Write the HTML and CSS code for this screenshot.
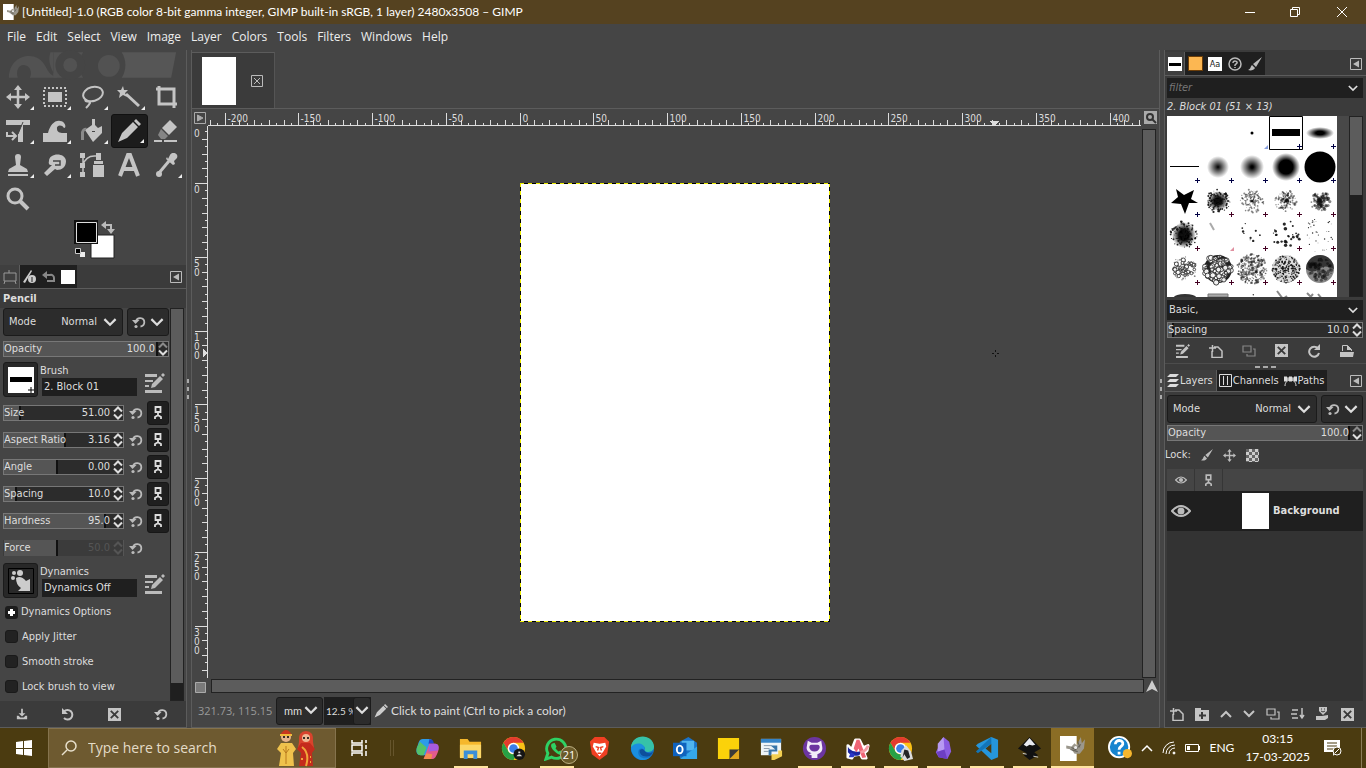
FILE: index.html
```html
<!DOCTYPE html>
<html lang="en">
<head>
    <meta charset="utf-8">
    <title>[Untitled]-1.0 – GIMP</title>
    <link rel="stylesheet" href="styles.css">
</head>
<body>
<!-- shared icons -->
<svg class="sprite" width="0" height="0" aria-hidden="true">
    <symbol id="chevron" viewBox="0 0 12 8"><path d="M1 1l5 5 5-5" fill="none" stroke="currentColor" stroke-width="2"/></symbol>
    <symbol id="chevron-up" viewBox="0 0 12 8"><path d="M1 7l5-5 5 5" fill="none" stroke="currentColor" stroke-width="2"/></symbol>
    <symbol id="arrows" viewBox="0 0 10 14"><path d="M1 5.500l4-4 4 4M1 8.500l4 4 4-4" fill="none" stroke="currentColor" stroke-width="2"/></symbol>
    <symbol id="arrows-down" viewBox="0 0 10 14"><path d="M1 5.500l4-4 4 4" fill="none" stroke="#8a8a8a" stroke-width="2"/><path d="M1 8.500l4 4 4-4" fill="none" stroke="#ddd" stroke-width="2"/></symbol>
    <symbol id="reset" viewBox="0 0 14 14"><path d="M4 6.500A4.200 4.200 0 1 1 8.500 11.500" fill="none" stroke="currentColor" stroke-width="1.800"/><path d="M0 5h7.500L3.500 9z" fill="currentColor"/><circle cx="4" cy="11.500" r="1.600" fill="currentColor"/></symbol>
    <symbol id="undo" viewBox="0 0 14 14"><path d="M3 4.500A4.800 4.800 0 1 1 3 11" fill="none" stroke="currentColor" stroke-width="2"/><path d="M1 1v6h6z" fill="currentColor"/></symbol>
    <symbol id="history" viewBox="0 0 14 14"><path d="M3 5h5a3 3 0 0 1 4 3v3H5" fill="none" stroke="currentColor" stroke-width="2"/><path d="M0 5l5-4v8z" fill="currentColor"/></symbol>
    <symbol id="refresh" viewBox="0 0 14 14"><path d="M11 4.500A5 5 0 1 0 12 9" fill="none" stroke="currentColor" stroke-width="2"/><path d="M13 0v6H7z" fill="currentColor"/></symbol>
    <symbol id="chain" viewBox="0 0 10 14"><path d="M2.500 1h5v5h-5zM5 6v3M2 13v-2l3-2 3 2v2" fill="none" stroke="currentColor" stroke-width="1.800"/></symbol>
    <symbol id="edit" viewBox="0 0 20 20"><path d="M0 1h12v3H0zM0 7h8v2H0zM0 12h4v2H0zM0 17h17v3H0z" fill="currentColor"/><path d="M6 15l1-4 8-8 3 3-8 8zM16 2l2-2 2 2-2 2z" fill="currentColor"/></symbol>
    <symbol id="menu-left" viewBox="0 0 12 12"><path d="M.5.5h11v11H.5z" fill="none" stroke="currentColor"/><path d="M9 2.500v7L3 6z" fill="currentColor"/></symbol>
    <symbol id="close-box" viewBox="0 0 14 14"><path d="M0 0h14v14H0z" fill="currentColor"/><path d="M3 3l8 8M11 3l-8 8" stroke="#3a3a3a" stroke-width="2"/></symbol>
    <symbol id="new" viewBox="0 0 14 14"><path d="M5 3h4l4 4v6.500H3V7M0 4h7M3.500 1v7" fill="none" stroke="currentColor" stroke-width="1.500"/></symbol>
    <symbol id="duplicate" viewBox="0 0 14 14"><path d="M1 2h8v6H1zM11 5h2v7H5v-2" fill="none" stroke="currentColor" stroke-width="1.200"/></symbol>
    <symbol id="save" viewBox="0 0 14 14"><path d="M6 1h2v5h3L7 10 3 6h3zM1 9h2l2 2h4l2-2h2v4H1z" fill="currentColor"/></symbol>
    <symbol id="brush" viewBox="0 0 14 14"><path d="M14 0L8 10 5 7zM4 8l3 3c-1 2-4 3-7 2 3-1 2-3 4-5z" fill="currentColor"/></symbol>
    <symbol id="eye" viewBox="0 0 20 12"><path d="M1 6q9-10 18 0q-9 10-18 0z" fill="none" stroke="currentColor" stroke-width="2"/><circle cx="10" cy="6" r="3.500" fill="currentColor"/></symbol>
    <symbol id="move" viewBox="0 0 24 24"><path d="M12 3v18M3 12h18" stroke="currentColor" stroke-width="2.500"/><path d="M12 0l4 5H8zM12 24l4-5H8zM0 12l5-4v8zM24 12l-5-4v8z" fill="currentColor"/></symbol>
    <symbol id="pencil" viewBox="0 0 24 24"><path d="M1 23l4-9L16 3l5 5L10 19zM17 2l2-2 5 5-2 2z" fill="currentColor"/></symbol>
    <symbol id="chrome" viewBox="0 0 26 26"><circle cx="13" cy="13" r="12" fill="#fbc116"/><path d="M2.600 7A12 12 0 0 1 23.400 7H13a6 6 0 0 0-5.200 9z" fill="#e33b2e"/><path d="M2.600 7A12 12 0 0 0 13 25l5.200-9a6 6 0 0 1-10.400 0z" fill="#27a146"/><circle cx="13" cy="13" r="6" fill="#fff"/><circle cx="13" cy="13" r="4.500" fill="#3b7ee8"/></symbol>
    <symbol id="wilber" viewBox="0 0 24 24"><path d="M0 0h16v24H0z" fill="#fff"/><path d="M6 9l5 1 3-3 2 2 4-8 1 6 3-4-1 9-4 5-5 0-3-4-5-1z" fill="#9b978c"/><path d="M11 11l4 2 5-5M10 13l7 2M17 5l2 6" stroke="#65625a" fill="none"/><circle cx="15" cy="11" r="1.500" fill="#eee"/></symbol>
    <symbol id="chevron-thin" viewBox="0 0 12 8"><path d="M1 7l5-5 5 5" fill="none" stroke="currentColor" stroke-width="1.500"/></symbol>
</svg>

<header class="titlebar">
    <svg class="app-icon" viewBox="0 0 24 24"><use href="#wilber"/></svg>
    <span class="title">[Untitled]-1.0 (RGB color 8-bit gamma integer, GIMP built-in sRGB, 1 layer) 2480x3508 – GIMP</span>
    <button aria-label="Minimize"><svg width="10" height="10"><path d="M0 5.500h10" stroke="#fff"/></svg></button>
    <button aria-label="Restore"><svg width="10" height="10" fill="none" stroke="#fff"><path d="M.5 2.500h7v7h-7zM2.500 2.500v-2h7v7h-2"/></svg></button>
    <button aria-label="Close"><svg width="10" height="10" stroke="#fff"><path d="M0 0l10 10M10 0L0 10"/></svg></button>
</header>

<nav class="menubar">
    <button>File</button><button>Edit</button><button>Select</button><button>View</button><button>Image</button><button>Layer</button><button>Colors</button><button>Tools</button><button>Filters</button><button>Windows</button><button>Help</button>
</nav>

<main class="workspace">
    <aside class="dock left-dock">
        <svg class="banner" viewBox="0 0 188 30" fill="#525252">
            <path d="M9 28C9 8 28 2 38 8s8 14 16 18V2h-3c-3 8 0 18 7 26H30c3-4 1-13-6-13-6 0-8 7-6 13z"/>
            <path d="M54 2h30c-5 9-5 17 0 26H54z"/><circle cx="71" cy="15" r="15" fill="#454545"/><circle cx="71" cy="15" r="7"/>
            <path d="M123 2h55l-5 26h-50c5-8 5-18 0-26z" fill="#565656"/><circle cx="110" cy="16" r="11"/>
        </svg>
        <div class="tools">
            <button class="more" aria-label="Move"><svg viewBox="0 0 24 24"><use href="#move"/></svg></button>
            <button class="more" aria-label="Rectangle select"><svg viewBox="0 0 24 24"><path d="M1 3h22v18H1z" fill="none" stroke="currentColor" stroke-width="2" stroke-dasharray="2 2"/><path d="M5 7h14v10H5z"/></svg></button>
            <button class="more" aria-label="Free select"><svg viewBox="0 0 24 24"><ellipse cx="13" cy="9" rx="10" ry="7" fill="none" stroke="currentColor" stroke-width="2" transform="rotate(-15 13 9)"/><path d="M6 14c-3 4 5 1 4 4-1 2-2 3-4 5" fill="none" stroke="currentColor" stroke-width="2"/></svg></button>
            <button class="more" aria-label="Fuzzy select"><svg viewBox="0 0 24 24"><path d="M6 1l1 4 4 0-3 3 2 4-4-2-4 3 1-5-3-3 4 0z"/><path d="M9 9l13 12" stroke="currentColor" stroke-width="3"/></svg></button>
            <button aria-label="Crop"><svg viewBox="0 0 24 24"><path d="M2 4h18v19M5 1v18h18" fill="none" stroke="currentColor" stroke-width="3"/></svg></button>
            <button class="more" aria-label="Unified transform"><svg viewBox="0 0 24 24"><path d="M0 1h24v5h-7v17h-5V15l4-9H0z"/><path d="M17 3l-5 12" stroke="#454545"/><path d="M1 13v4h9m-4-4l4 4-4 4" fill="none" stroke="currentColor" stroke-width="2"/></svg></button>
            <button class="more" aria-label="Warp"><svg viewBox="0 0 24 24"><path d="M0 23v-9h5C7 6 12 1 17 2c5 0 7 7 4 7-2-4-8-3-7 1 0 3 3 4 6 4h4v9z"/></svg></button>
            <button class="more" aria-label="Bucket fill"><svg viewBox="0 0 24 24"><path d="M5 11l7-5v7h3V6l3 3 4-2v7L13 23z"/><path d="M12 0h3v12h-3z"/><path d="M1 21V13q2-5 6-4l-3 4v8z" fill="#8a8a8a"/></svg></button>
            <button class="more active" aria-label="Pencil"><svg viewBox="0 0 24 24"><use href="#pencil"/></svg></button>
            <button aria-label="Eraser"><svg viewBox="0 0 24 24"><path d="M16 1l7 7-8 8-7-7z"/><path d="M7 10l7 7-3 3H7l-3-4z" fill="#858585"/><path d="M0 21h8v2H0zM10 21h13v2H10z"/></svg></button>
            <button class="more" aria-label="Clone"><svg viewBox="0 0 24 24"><path d="M9 4a3 3 0 0 1 6 0l-1 8 7 4 1 3H2l1-3 7-4zM2 21h20v2H2z"/></svg></button>
            <button class="more" aria-label="Smudge"><svg viewBox="0 0 24 24"><path d="M6 8c0-8 16-9 17 0 0 6-4 9-9 9l-2-1-8 7-3-3 8-8c-2 0-4 0-3-4z"/><path d="M10 8h7v4h-5" fill="none" stroke="#454545" stroke-width="1.500"/></svg></button>
            <button aria-label="Paths"><svg viewBox="0 0 24 24"><path d="M3 2v20M3 12Q6 2 16 3" fill="none" stroke="currentColor" stroke-width="1.500"/><path d="M0 0h5v5H0zM0 10h5v5H0zM0 19h5v5H0zM16 0h5v7h-5zM14 8h9v3h-9zM13 12h11v12H13z"/></svg></button>
            <button aria-label="Text"><svg viewBox="0 0 24 24"><path d="M3 23L11 2h2l8 21M6 16h12" fill="none" stroke="currentColor" stroke-width="4"/></svg></button>
            <button class="more" aria-label="Color picker"><svg viewBox="0 0 24 24"><path d="M14 6l2-4c2-4 9-2 7 3l-3 3 1 3-2 1-7-6 1-2z"/><path d="M15 8L5 20" stroke="currentColor" stroke-width="3"/><circle cx="5" cy="21" r="3"/></svg></button>
            <button aria-label="Zoom"><svg viewBox="0 0 24 24"><circle cx="9" cy="9" r="7" fill="none" stroke="currentColor" stroke-width="3"/><path d="M14 14l8 8" stroke="currentColor" stroke-width="4"/></svg></button>
        </div>
        <div class="colors">
            <svg width="42" height="40" viewBox="0 0 42 40">
                <path d="M17 15h23v23H17z" fill="#fff" stroke="#222"/><path d="M1 1h22v22H1z" stroke="#111" stroke-width="2"/><path d="M2.500 2.500h20v20h-20z" stroke="#ddd"/>
                <path d="M30 5h7v6" fill="none" stroke="#bbb" stroke-width="2"/><path d="M27 5l5-4v8zM33 9h8l-4 5z" fill="#bbb"/>
                <path d="M6 32h5v5H6z" fill="#eee"/><path d="M1.500 28.500h5v5h-5z" stroke="#ccc"/>
            </svg>
        </div>
        <div class="dock-tabs">
            <button class="tab active" aria-label="Tool options"><svg width="16" height="16" fill="none" stroke="#999"><path d="M2 4h12v8H2zM7 1v3M3 12l-1 3m11-3l1 3"/></svg></button>
            <button class="tab" aria-label="Device status"><svg width="16" height="16"><path d="M1 13L9 1l1 1-7 12z" fill="#ccc"/><circle cx="10" cy="10" r="4" fill="#ccc"/><path d="M10 8v5" stroke="#222"/></svg></button>
            <button class="tab" aria-label="Undo history"><svg width="14" height="14" class="dim"><use href="#history"/></svg></button>
            <button class="tab" aria-label="Images"><i class="white-box"></i></button>
            <button class="dock-menu" aria-label="Configure this tab"><svg width="12" height="12"><use href="#menu-left"/></svg></button>
        </div>
        <section class="options">
            <h2>Pencil</h2>
            <div class="options-body">
                <div class="fields">
                    <div class="mode-row">
                        <div class="combo"><label for="mode">Mode</label><select id="mode"><option>Normal</option></select><svg width="14" height="9"><use href="#chevron"/></svg></div>
                        <button class="combo reset-combo" aria-label="Switch mode group"><svg width="14" height="14"><use href="#reset"/></svg><svg width="14" height="9"><use href="#chevron"/></svg></button>
                    </div>
                    <div class="spin full" style="--fill: 94%"><label for="opacity">Opacity</label><input id="opacity" value="100.0"><svg width="10" height="14"><use href="#arrows-down"/></svg></div>
                    <div class="preset">
                        <button class="preview" aria-label="Brush preview"><svg width="26" height="26"><path d="M0 0h26v26H0z" fill="#fff"/><path d="M2 10h22v5H2z"/><path d="M20 23h6M23 20v6" stroke="#000"/></svg></button>
                        <div><label for="brush-name">Brush</label><input id="brush-name" value="2. Block 01"></div>
                        <button class="icon" aria-label="Edit brush"><svg width="20" height="20"><use href="#edit"/></svg></button>
                    </div>
                    <div class="row"><div class="spin" style="--fill: 14%"><label for="size">Size</label><input id="size" value="51.00"><svg width="10" height="14"><use href="#arrows"/></svg></div><button class="icon" aria-label="Reset size"><svg width="14" height="14"><use href="#reset"/></svg></button><button class="link" aria-label="Link size"><svg width="10" height="14"><use href="#chain"/></svg></button></div>
                    <div class="row"><div class="spin" style="--fill: 52%"><label for="ratio">Aspect Ratio</label><input id="ratio" value="3.16"><svg width="10" height="14"><use href="#arrows"/></svg></div><button class="icon" aria-label="Reset aspect ratio"><svg width="14" height="14"><use href="#reset"/></svg></button><button class="link" aria-label="Link aspect ratio"><svg width="10" height="14"><use href="#chain"/></svg></button></div>
                    <div class="row"><div class="spin" style="--fill: 45%"><label for="angle">Angle</label><input id="angle" value="0.00"><svg width="10" height="14"><use href="#arrows"/></svg></div><button class="icon" aria-label="Reset angle"><svg width="14" height="14"><use href="#reset"/></svg></button><button class="link" aria-label="Link angle"><svg width="10" height="14"><use href="#chain"/></svg></button></div>
                    <div class="row"><div class="spin" style="--fill: 11%"><label for="spacing">Spacing</label><input id="spacing" value="10.0"><svg width="10" height="14"><use href="#arrows"/></svg></div><button class="icon" aria-label="Reset spacing"><svg width="14" height="14"><use href="#reset"/></svg></button><button class="link" aria-label="Link spacing"><svg width="10" height="14"><use href="#chain"/></svg></button></div>
                    <div class="row"><div class="spin" style="--fill: 86%"><label for="hardness">Hardness</label><input id="hardness" value="95.0"><svg width="10" height="14"><use href="#arrows"/></svg></div><button class="icon" aria-label="Reset hardness"><svg width="14" height="14"><use href="#reset"/></svg></button><button class="link" aria-label="Link hardness"><svg width="10" height="14"><use href="#chain"/></svg></button></div>
                    <div class="row"><div class="spin disabled" style="--fill: 45%"><label for="force">Force</label><input id="force" value="50.0" disabled><svg width="10" height="14"><use href="#arrows"/></svg></div><button class="icon" aria-label="Reset force"><svg width="14" height="14"><use href="#reset"/></svg></button></div>
                    <div class="preset">
                        <button class="preview" aria-label="Dynamics preview"><svg width="26" height="26" fill="#ccc"><path d="M.5.5h25v25H.5z" fill="none" stroke="#000"/><circle cx="5" cy="10" r="2"/><circle cx="6" cy="5" r="2"/><circle cx="12" cy="5" r="3"/><path d="M8 10q5-3 10 3l4-2v12H10l3-3q-5-3-5-10z"/></svg></button>
                        <div><label for="dynamics">Dynamics</label><input id="dynamics" value="Dynamics Off"></div>
                        <button class="icon" aria-label="Edit dynamics"><svg width="20" height="20"><use href="#edit"/></svg></button>
                    </div>
                    <button class="expander"><i></i>Dynamics Options</button>
                    <label class="check"><input type="checkbox">Apply Jitter</label>
                    <label class="check"><input type="checkbox">Smooth stroke</label>
                    <label class="check"><input type="checkbox">Lock brush to view</label>
                </div>
                <div class="scroll"><i></i></div>
            </div>
        </section>
        <footer class="dock-buttons">
            <button aria-label="Save preset"><svg width="12" height="14"><use href="#save"/></svg></button>
            <button aria-label="Restore preset"><svg width="14" height="14"><use href="#undo"/></svg></button>
            <button aria-label="Delete preset"><svg width="13" height="13"><use href="#close-box"/></svg></button>
            <button aria-label="Reset"><svg width="14" height="14"><use href="#reset"/></svg></button>
        </footer>
    </aside>
    <div class="splitter"><i></i><i></i><i></i></div>

    <section class="image-window">
        <div class="image-tabs">
            <div class="image-tab"><i class="thumb"></i><button aria-label="Close image"><svg width="12" height="12" fill="none" stroke="#bbb"><path d="M.5.5h11v11H.5zM3 3l6 6M9 3L3 9"/></svg></button></div>
        </div>
        <div class="view">
            <button class="corner" aria-label="Image menu"><svg width="12" height="12" fill="none" stroke="#aaa"><path d="M.5.5h11v11H.5z"/><path d="M3.500 3v6L9 6z" fill="#aaa"/></svg></button>
            <svg class="ruler ruler-h" id="rulerH"></svg>
            <button class="corner" aria-label="Zoom with window"><svg width="13" height="13" fill="none"><path d="M0 0h13v13H0z" fill="#aaa"/><circle cx="6" cy="6" r="3" stroke="#333" stroke-width="2"/><path d="M8 8l4 4" stroke="#333" stroke-width="2"/></svg></button>
            <svg class="ruler ruler-v" id="rulerV"></svg>
            <div class="canvas" id="canvas">
                <div class="page"></div>
                <svg class="pointer" width="7" height="7" stroke="#111" fill="none"><path d="M0 3.500h2M5 3.500h2M3.500 0v2M3.500 5v2"/></svg>
            </div>
            <div class="scroll"><i></i></div>
            <button class="corner" aria-label="Quick mask"><svg width="11" height="11"><path d="M.5.5h10v10H.5z" fill="#7a7a7a" stroke="#aaa"/></svg></button>
            <div class="scroll scroll-h"><i></i></div>
            <button class="corner nav" aria-label="Navigate"><svg width="12" height="12"><path d="M6 0l6 12-6-3-6 3z" fill="#ccc"/></svg></button>
        </div>
        <div class="statusbar">
            <span class="coords">321.73, 115.15</span>
            <div class="combo unit"><select aria-label="Unit"><option>mm</option></select><svg width="14" height="9"><use href="#chevron"/></svg></div>
            <div class="zoom"><input aria-label="Zoom" value="12.5 %"><button aria-label="Zoom levels"><svg width="14" height="9"><use href="#chevron"/></svg></button></div>
            <svg class="status-icon" width="14" height="14"><use href="#pencil"/></svg>
            <span>Click to paint (Ctrl to pick a color)</span>
        </div>
    </section>
    <div class="splitter"><i></i><i></i><i></i></div>

    <aside class="dock right-dock">
        <div class="dock-tabs">
            <button class="tab active" aria-label="Brushes"><svg width="14" height="14"><path d="M0 0h14v14H0z" fill="#fff"/><path d="M1 6h12v3H1z"/></svg></button>
            <button class="tab" aria-label="Patterns"><i class="pattern"></i></button>
            <button class="tab" aria-label="Fonts"><span class="font-icon">Aa</span></button>
            <button class="tab" aria-label="Document history"><svg width="14" height="14" fill="none" stroke="#bbb" stroke-width="1.500"><circle cx="7" cy="7" r="6"/><path d="M5 6c0-3 5-2 4 0L7 8v1M7 10v1"/></svg></button>
            <button class="tab" aria-label="Paint tools"><svg width="14" height="14" class="light"><use href="#brush"/></svg></button>
            <button class="dock-menu" aria-label="Configure this tab"><svg width="12" height="12"><use href="#menu-left"/></svg></button>
        </div>
        <section class="brushes">
            <div class="entry"><input class="filter" aria-label="Filter" placeholder="filter"><svg width="10" height="7"><use href="#chevron"/></svg></div>
            <p class="brush-title">2. Block 01 (51 × 13)</p>
            <div class="brush-list">
                <div class="brush-grid" id="brushGrid"></div>
                <div class="scroll"><i></i></div>
            </div>
            <div class="entry"><input aria-label="Tags" value="Basic,"><svg width="10" height="7"><use href="#chevron"/></svg></div>
            <div class="spin full" style="--fill: 3%"><label for="bspacing">Spacing</label><input id="bspacing" value="10.0"><svg width="10" height="14"><use href="#arrows"/></svg></div>
            <div class="dock-buttons">
                <button aria-label="Edit this brush"><svg width="14" height="14"><use href="#edit"/></svg></button>
                <button aria-label="New brush"><svg width="14" height="14"><use href="#new"/></svg></button>
                <button aria-label="Duplicate brush" class="dim"><svg width="14" height="14"><use href="#duplicate"/></svg></button>
                <button aria-label="Delete brush"><svg width="13" height="13"><use href="#close-box"/></svg></button>
                <button aria-label="Refresh brushes"><svg width="14" height="14"><use href="#refresh"/></svg></button>
                <button aria-label="Open brush as image"><svg width="14" height="14"><path d="M2.500 7V1.500h5l4 4V7" fill="none" stroke="currentColor"/><path d="M7 1l5 5H7zM0 8h14l-1 5H0z" fill="currentColor"/></svg></button>
            </div>
        </section>
        <div class="grip"><i></i><i></i><i></i></div>
        <div class="dock-tabs labelled">
            <button class="tab active"><svg width="12" height="14" fill="currentColor"><path d="M3 0h9l-3 3H0zM3 5h9l-3 3H0zM3 10h9l-3 3H0z"/></svg>Layers</button>
            <button class="tab"><svg width="13" height="13" fill="none" stroke="currentColor"><path d="M.5.5h12v12H.5zM4.500 2v9M8.500 2v9"/></svg>Channels</button>
            <button class="tab"><svg width="13" height="12" fill="none" stroke="currentColor"><path d="M0 4h13M1 11c0-8 11-8 11 0"/><path d="M0 2h3v4H0zM10 2h3v4h-3zM5 2h3v4H5z" fill="currentColor"/></svg>Paths</button>
            <button class="dock-menu" aria-label="Configure this tab"><svg width="12" height="12"><use href="#menu-left"/></svg></button>
        </div>
        <section class="layers">
            <div class="mode-row">
                <div class="combo"><label for="lmode">Mode</label><select id="lmode"><option>Normal</option></select><svg width="14" height="9"><use href="#chevron"/></svg></div>
                <button class="combo reset-combo" aria-label="Switch mode group"><svg width="14" height="14"><use href="#reset"/></svg><svg width="14" height="9"><use href="#chevron"/></svg></button>
            </div>
            <div class="spin full" style="--fill: 94%"><label for="lopacity">Opacity</label><input id="lopacity" value="100.0"><svg width="10" height="14"><use href="#arrows-down"/></svg></div>
            <div class="lock">Lock:
                <button aria-label="Lock pixels"><svg width="12" height="12"><use href="#brush"/></svg></button>
                <button aria-label="Lock position"><svg width="13" height="13"><use href="#move"/></svg></button>
                <button aria-label="Lock alpha"><i class="checker"></i></button>
            </div>
            <div class="layer-list">
                <div class="layer-head"><span><svg width="12" height="8"><use href="#eye"/></svg></span><span><svg width="9" height="13"><use href="#chain"/></svg></span></div>
                <div class="layer"><svg width="20" height="12"><use href="#eye"/></svg><i></i><b>Background</b></div>
            </div>
        </section>
        <footer class="dock-buttons">
            <button aria-label="New layer"><svg width="14" height="14"><use href="#new"/></svg></button>
            <button aria-label="New group"><svg width="14" height="14"><path d="M0 1h6v2h8v11H0z" fill="currentColor"/><path d="M7 5v7M4 8.500h7" stroke="#3a3a3a" stroke-width="2"/></svg></button>
            <button aria-label="Raise layer"><svg width="12" height="8"><use href="#chevron-up"/></svg></button>
            <button aria-label="Lower layer"><svg width="12" height="8"><use href="#chevron"/></svg></button>
            <button aria-label="Duplicate layer"><svg width="14" height="14"><use href="#duplicate"/></svg></button>
            <button aria-label="Merge layer"><svg width="14" height="12" fill="none" stroke="currentColor" stroke-width="1.500"><path d="M1 2h6M0 6h6M1 10h6M11 0v10M9 7l2 3 2-3"/></svg></button>
            <button aria-label="Add mask"><svg width="14" height="14" fill="currentColor"><path d="M3 0h8v4L7 8 3 4zM0 9h6l6-1v3l-3 2H0z"/><path d="M5 2h1M8 2h1M5 4q2 2 4 0" fill="none" stroke="#3a3a3a"/></svg></button>
            <button aria-label="Delete layer"><svg width="13" height="13"><use href="#close-box"/></svg></button>
        </footer>
    </aside>
</main>

<footer class="taskbar">
    <button class="start" aria-label="Start"><svg width="16" height="16" fill="#fff"><path d="M0 2l7-1v7H0zM8 1l8-1v8H8zM0 9h7v6l-7-1zM8 9h8v7l-8-1z"/></svg></button>
    <div class="search">
        <svg width="16" height="16" fill="none" stroke="#e8e0cc" stroke-width="1.500"><circle cx="10" cy="6" r="5"/><path d="M6 10l-5 5"/></svg>
        <input aria-label="Search" placeholder="Type here to search">
        <svg width="42" height="38" viewBox="0 0 42 38">
            <path d="M6 14h11l4 6-3 4 1 13H4l2-13-4-4z" fill="#efc24c"/><circle cx="11" cy="8" r="5" fill="#e7b38a"/><path d="M5 6q6-10 12 0z" fill="#c8371e"/><path d="M5 6h12" stroke="#f2b93a" stroke-width="2"/><path d="M11 17v18M8 20l3 4 3-4" stroke="#b97a1d" fill="none"/><circle cx="9" cy="8" r="1"/><circle cx="13" cy="8" r="1"/>
            <path d="M24 13q-1-11 7-11t7 11l1 6H23z" fill="#d8432c"/><path d="M26 14h9l5 6-3 4 1 13H24l2-13-4-4z" fill="#c42b1c"/><circle cx="31" cy="9" r="4" fill="#efb993"/><circle cx="29" cy="9" r="1"/><circle cx="33" cy="9" r="1"/><path d="M27 18q8 6 4 19M26 30h2M35 28h1M35 33h1" fill="none" stroke="#f0a63a" stroke-width="2"/>
        </svg>
    </div>
    <div class="apps">
        <button aria-label="Task view"><svg width="18" height="16" fill="none" stroke="#fff" stroke-width="1.500"><path d="M1 0v3h10V0M1 16v-3h10v3M1 5h10v6H1zM15 0v3M15 5v4M15 11v5"/></svg></button>
        <span class="divider"></span>
        <button aria-label="Copilot"><svg viewBox="0 0 26 26"><path d="M8 3h9l-5 17H6c-5 0-5-5-4-8 2-5 2-9 6-9z" fill="#2d9be8"/><path d="M2 12l3-6 7 6-3 8H6c-4 0-5-4-4-8z" fill="#54c26a"/><path d="M15 3c4 0 4 3 5 5h-6z" fill="#2345c6"/><path d="M15 8h6c4 0 4 5 3 8-2 5-3 8-7 8H9z" fill="#e25a8e"/><path d="M15 8h6c4 0 4 4 3 7l-10 1z" fill="#a85be0"/><path d="M9 24l3-6 6 1-1 5z" fill="#f38b52"/></svg></button>
        <button class="open" aria-label="File Explorer"><svg viewBox="0 0 26 26"><path d="M2 3h8l2 3h12v16H2z" fill="#f5b72c"/><path d="M2 9h22v14H2z" fill="#fbd768"/><path d="M6 24v-9h14v9h-4v-5h-6v5z" fill="#3b8fd8"/></svg></button>
        <button aria-label="Chrome"><svg viewBox="0 0 26 26"><use href="#chrome"/><circle cx="19" cy="19" r="6" fill="#151515"/><path d="M16 21q3-4 6 0zM18 16h2v2h-2z" fill="#ddd"/></svg></button>
        <button class="open" aria-label="WhatsApp"><svg viewBox="0 0 26 26"><path d="M2 24l2-6a10 10 0 1 1 4 4z" fill="none" stroke="#2ed164" stroke-width="3"/><path d="M8 8l3-1 2 4-1 2 3 3 2-1 3 2c-1 4-5 3-8 0S6 11 8 8z" fill="#2ed164"/></svg><em class="count">21</em></button>
        <button aria-label="Brave"><svg viewBox="0 0 26 26"><path d="M8 1h10l5 5-2 13-8 6-8-6L3 6z" fill="#f13f22"/><path d="M7 7l6 1 6-1 1 4-3 5-4 5-4-5-3-5z" fill="#fff"/><path d="M9 11l3 1-1 3M17 11l-3 1 1 3M11 18h4" fill="none" stroke="#f13f22" stroke-width="1.500"/></svg></button>
        <button aria-label="Edge"><svg viewBox="0 0 26 26"><circle cx="13" cy="13" r="12" fill="#1574c8"/><path d="M1 12C2-3 24-3 25 11c0 6-7 7-10 4 3-6-8-9-14-3z" fill="#36c2a8"/><path d="M1 12c4-7 16-5 14 3-4-5-9 1-5 6 3 3 8 3 12 0-9 9-21 1-21-9z" fill="#1b8fdf"/><path d="M10 15c2-2 4-1 5 0 2 3 6 4 9 1-1 3-3 5-5 5-6 1-9-2-9-6z" fill="#0d4f9c"/></svg></button>
        <button aria-label="Outlook"><svg viewBox="0 0 26 26"><path d="M7 6l9-5 9 6v16H7z" fill="#1a73c8"/><path d="M9 5h13v10H9z" fill="#50b4ee"/><path d="M7 24l18-13v13z" fill="#35a7ea"/><path d="M0 7h14v14H0z" fill="#0f62bd"/><ellipse cx="7" cy="14" rx="3" ry="4" fill="none" stroke="#fff" stroke-width="2"/></svg></button>
        <button aria-label="Sticky Notes"><svg viewBox="0 0 26 26"><path d="M2 2h22v12L14 24H2z" fill="#fbd20a"/><path d="M14 14h10v10H14z" fill="#3b3a38"/><path d="M14 24l10-10v10z" fill="#e2a81d"/></svg></button>
        <button aria-label="Python editor"><svg viewBox="0 0 26 26"><path d="M2 3h21v17H2z" fill="#eef4f8"/><path d="M2 3h21v4H2z" fill="#3584c8"/><path d="M5 10h8M5 13h6M5 16h5" stroke="#89a"/><path d="M12 10h7v6h-6v4h-3v-6h7" fill="#3674a8"/><path d="M24 15v6l-8 4h-3v-6h7v-4z" fill="#f2cf51"/></svg></button>
        <button class="open" aria-label="GitHub"><svg viewBox="0 0 26 26"><circle cx="13" cy="13" r="12" fill="#6c35a0"/><path d="M6 5l4 2h6l4-2 1 6c1 5-2 7-5 8v4h-6v-3l-3-1 3-1c-3-1-6-3-5-7z" fill="#f2ecf8"/><path d="M10 9h6c4 0 3 7-3 7s-7-7-3-7z" fill="#6c35a0"/></svg></button>
        <button class="open" aria-label="Arc"><svg viewBox="0 0 26 26"><path d="M3 10l4 4 4-10h4l4 8 5-2-1 5-3 3 2 5-4 0-2-4-7 1-2 3-4-1z" fill="#fff" stroke="#fff" stroke-width="3" stroke-linejoin="round"/><path d="M3 11c2 5 10 7 14 4l-2 5c-5 1-9 1-12-3z" fill="#1c27a0"/><path d="M9 13L12 4h3l7 18-4 1-4-10-2 4z" fill="#ee6475"/><path d="M4 22l2-5 4 2-1 3z" fill="#2a38c8"/><path d="M16 17q6-1 8-7" stroke="#f49aa2" stroke-width="3" fill="none"/></svg></button>
        <button class="open" aria-label="Chrome profile"><svg viewBox="0 0 26 26"><use href="#chrome"/><path d="M14 15l5-5 5 6 2 8-9 2-4-5z" fill="#ddd"/><path d="M17 14l4 1 2 7-3 2-3-5-2 4z" fill="#252525"/></svg></button>
        <button class="open" aria-label="Obsidian"><svg viewBox="0 0 26 26"><path d="M13 1l6 5 2 10-4 8-9-2-3-5 2-4z" fill="#8a5be0"/><path d="M13 1l1 13-7 2 0-8z" fill="#b79af2"/><path d="M6 17l8-3 3 10-9-2z" fill="#6d3fc4"/></svg></button>
        <button class="open" aria-label="VS Code"><svg viewBox="0 0 26 26"><path d="M18 1l7 3v18l-7 3L2 10l2-2z" fill="#2596dc"/><path d="M18 8v10l-6-5z" fill="#4b3b10"/><path d="M2 16l16-15v7L4 18z" fill="#1275b8"/></svg></button>
        <button class="open" aria-label="Inkscape"><svg viewBox="0 0 26 26"><path d="M13 1l12 12-7 4 4 3-9 5-6-5 3-2-9-5z" fill="#111"/><path d="M13 2l6 7-3 1-3-1-3 2-3-2z" fill="#e8eaf0"/><path d="M6 18l4 1M17 21l5 1" stroke="#ccc"/></svg></button>
        <button class="open current" aria-label="GIMP"><svg viewBox="0 0 24 24"><use href="#wilber"/></svg></button>
    </div>
    <div class="tray">
        <svg class="help" viewBox="0 0 26 26"><circle cx="12" cy="12" r="11" fill="#1684cf" stroke="#fff" stroke-width="2"/><path d="M8 9c0-6 9-5 8 0-1 3-4 2-4 6M12 17v3" fill="none" stroke="#fff" stroke-width="3"/><circle cx="21" cy="19" r="5" fill="#f5b62d"/></svg>
        <svg width="12" height="8"><use href="#chevron-thin"/></svg>
        <svg width="14" height="14" fill="none" stroke="#fff"><path d="M1 12A11 11 0 0 1 12 1M4 13a9 9 0 0 1 9-9M7 13a6 6 0 0 1 6-6"/><circle cx="12" cy="12" r="1" fill="#fff"/></svg>
        <svg width="16" height="10" fill="none" stroke="#fff"><path d="M.5 1.500h13v7H.5zM14.500 3v4"/><path d="M2 3h3v4H2z" fill="#fff" stroke="none"/></svg>
        <span>ENG</span>
        <time>03:15<br>17-03-2025</time>
        <svg width="18" height="17"><path d="M0 0h16v12h-4l-3 4v-4H0z" fill="#fff"/><path d="M3 3h10M3 6h10M3 9h7" stroke="#4b3b10"/><circle cx="13" cy="11" r="4" fill="#4b3b10" stroke="#fff"/><path d="M11 13l4-4" stroke="#fff"/></svg>
    </div>
</footer>
<script src="script.js"></script>
</body>
</html>
```
FILE: styles.css
```css
* {
    box-sizing: border-box;
}
body {
    margin: 0;
    height: 100vh;
    display: flex;
    flex-direction: column;
    overflow: hidden;
    background: #454545;
    color: #ddd;
    font: 11px/14px "DejaVu Sans Condensed", "Noto Sans", sans-serif;
}
button,
input,
select {
    font: inherit;
    color: inherit;
    background: none;
    border: 0;
    padding: 0;
    margin: 0;
    min-width: 0;
}
button {
    display: flex;
    align-items: center;
    justify-content: center;
}
input {
    outline: 0;
}
svg {
    display: block;
    flex: none;
}
i {
    display: block;
}
.sprite {
    position: absolute;
}

/* window frame */
.titlebar {
    height: 24px;
    display: flex;
    align-items: center;
    background: #554220;
    color: #fff;
    font: 12px/16px Lato, "Open Sans", sans-serif;
}
.app-icon {
    width: 18px;
    height: 16px;
    margin: 0 2px;
}
.title {
    flex: 1;
    white-space: nowrap;
}
.titlebar button {
    width: 45px;
    height: 20px;
}
.titlebar button:last-child {
    width: 49px;
}
.menubar {
    height: 26px;
    display: flex;
    padding-left: 2px;
    color: #eee;
    font: 12px/16px "Open Sans", sans-serif;
}
.menubar button {
    padding: 0 5px;
}
.workspace {
    flex: 1;
    min-height: 0;
    display: flex;
}

/* docks */
.dock {
    flex: none;
    display: flex;
    flex-direction: column;
}
.left-dock {
    width: 187px;
    border-right: 1px solid #5c5c5c;
}
.right-dock {
    width: 202px;
    padding-top: 2px;
    background: #3b3b3b;
    border-left: 1px solid #5c5c5c;
}
.banner {
    width: 100%;
    height: 30px;
}
.tools {
    display: grid;
    grid-template-columns: repeat(5, 37px);
    grid-auto-rows: 34px;
}
.tools button {
    color: #c4c4c4;
    fill: currentColor;
    border-radius: 3px;
    padding-right: 2px;
}
.tools svg {
    width: 24px;
    height: 24px;
}
.tools .active {
    background: #1c1c1c;
    border: 1px solid #111;
}
.more {
    position: relative;
}
.more::after {
    content: "";
    position: absolute;
    right: 3px;
    bottom: 4px;
    border-left: 4px solid transparent;
    border-bottom: 4px solid #eee;
}
.colors {
    height: 49px;
    padding: 4px 0 0 74px;
}
.dock-tabs {
    height: 24px;
    flex: none;
    display: flex;
    align-items: stretch;
    background: #3b3b3b;
    border-bottom: 1px solid #5c5c5c;
}
.tab {
    width: 20px;
    background: #1f1f1f;
}
.left-dock .tab {
    width: 19px;
}
.left-dock .tab.active,
.right-dock .tab.active {
    width: 20px;
}
.tab.active {
    background: #3f3f3f;
    border-right: 1px solid #5c5c5c;
}
.dock-menu {
    margin: 0 4px 0 auto;
    color: #bbb;
}
.white-box {
    width: 14px;
    height: 14px;
    background: #fff;
}
.dim {
    color: #888;
}
.light {
    color: #bbb;
}
.pattern {
    width: 13px;
    height: 13px;
    background: #fcb752;
    outline: 1px solid #6b3d08;
}
.font-icon {
    width: 14px;
    background: #fff;
    color: #222;
    font-size: 9px;
    line-height: 14px;
}
.labelled .tab,
.labelled .tab.active {
    width: auto;
    gap: 1px;
    padding: 0 3px 0 2px;
}

/* tool options */
.options {
    flex: 1;
    min-height: 0;
    padding: 3px 2px 0 3px;
    background: linear-gradient(#3b3b3b 19px, #454545 19px);
}
h2 {
    margin: 0 0 2px;
    font-size: 11px;
    line-height: 14px;
}
.options-body {
    display: flex;
    justify-content: space-between;
    height: calc(100% - 16px);
}
.fields {
    width: 166px;
}
.mode-row {
    display: flex;
    gap: 4px;
    height: 28px;
}
.combo {
    flex: 1;
    position: relative;
    display: flex;
    align-items: center;
    gap: 4px;
    padding: 0 5px;
    background: #2c2c2c;
    border: 1px solid #1b1b1b;
    border-radius: 3px;
}
.combo select {
    appearance: none;
    flex: 1;
    text-align: right;
    text-align-last: right;
    padding-right: 2px;
}
.reset-combo {
    flex: 0 0 42px;
    padding: 0;
}
.reset-combo svg:first-child {
    color: #bbb;
}
.spin {
    width: 121px;
    height: 16px;
    display: flex;
    align-items: center;
    justify-content: space-between;
    border: 1px solid #777;
    background: linear-gradient(90deg, #555 calc(var(--fill) - 2px), #111 calc(var(--fill) - 2px) var(--fill), #2c2c2c var(--fill));
}
.spin input {
    flex: 1;
    width: 20px;
    text-align: right;
    margin-right: 3px;
}
.spin.full {
    width: 100%;
}
.spin.disabled {
    border-color: transparent;
    background: linear-gradient(90deg, #555 calc(var(--fill) - 2px), #111 calc(var(--fill) - 2px) var(--fill), #3b3b3b var(--fill));
}
.disabled input,
.disabled svg {
    color: #555;
}
.fields > .spin {
    margin: 5px 0;
}
.preset {
    display: flex;
    align-items: center;
    gap: 2px;
    height: 35px;
}
.preset > div {
    width: 97px;
}
.preset label {
    display: block;
}
.preset input {
    width: 95px;
    height: 18px;
    margin-left: 2px;
    padding-left: 2px;
    background: #1f1f1f;
}
.preview {
    width: 35px;
    height: 35px;
    background: #282828;
    border: 1px solid #1b1b1b;
    border-radius: 3px;
}
.icon {
    color: #bbb;
}
.preset .icon {
    margin: 6px 0 0 6px;
}
.fields .row {
    height: 27px;
    display: flex;
    align-items: center;
}
.row .icon {
    width: 23px;
}
.preset + .row {
    margin-top: 2px;
}
.row + .preset {
    margin: 2px 0;
}
.link {
    width: 22px;
    height: 24px;
    background: #1f1f1f;
    border: 1px solid #171717;
    border-radius: 3px;
}
.expander,
.check {
    display: flex;
    align-items: center;
    height: 25px;
    gap: 3px;
}
.expander {
    height: 24px;
}
.expander i {
    width: 13px;
    height: 13px;
    margin-left: 2px;
    border-radius: 3px;
    background:
        linear-gradient(#fff, #fff) center / 7px 3px no-repeat,
        linear-gradient(#fff, #fff) center / 3px 7px no-repeat,
        #1c1c1c;
}
.check input {
    appearance: none;
    width: 13px;
    height: 13px;
    margin: 0 1px 0 2px;
    border-radius: 3px;
    background: #222;
    border: 1px solid #1a1a1a;
}
.scroll {
    width: 14px;
    background: #1f1f1f;
    border: 1px solid #222;
}
.scroll i {
    height: 100%;
    background: #5c5c5c;
}
.options .scroll {
    padding-bottom: 17px;
}
.dock-buttons {
    height: 27px;
    flex: none;
    display: flex;
    align-items: center;
    justify-content: space-around;
    padding-right: 2px;
    background: #3b3b3b;
    border-bottom: 1px solid #5c5c5c;
    color: #c4c4c4;
}
.right-dock > .dock-buttons {
    padding-right: 7px;
}
.splitter {
    width: 4px;
    flex: none;
    display: flex;
    flex-direction: column;
    justify-content: center;
    gap: 4px;
}
.splitter i {
    width: 2px;
    height: 4px;
    background: #aaa;
}

/* image window */
.image-window {
    flex: 1;
    min-width: 0;
    display: flex;
    flex-direction: column;
    border-left: 1px solid #5c5c5c;
    border-right: 1px solid #5c5c5c;
}
.image-tabs {
    height: 59px;
    padding-top: 2px;
    border-bottom: 1px solid #5c5c5c;
}
.image-tab {
    width: 83px;
    height: 56px;
    display: flex;
    align-items: center;
    gap: 15px;
    padding-left: 10px;
    background: #3b3b3b;
    border-top: 1px solid #5c5c5c;
    border-right: 1px solid #555;
}
.thumb {
    width: 34px;
    height: 48px;
    background: #fff;
}
.view {
    flex: 1;
    min-height: 0;
    display: grid;
    grid-template-columns: 16px 1fr 18px;
    grid-template-rows: 17px 1fr 18px;
    overflow: hidden;
}
.ruler {
    width: 100%;
    height: 100%;
    stroke: #ddd;
    shape-rendering: crispEdges;
}
.ruler text {
    fill: #ddd;
    stroke: none;
    font-size: 10px;
}
.canvas {
    position: relative;
    display: flex;
    align-items: center;
    justify-content: center;
    overflow: hidden;
}
.page {
    width: 310px;
    height: 439px;
    background:
        repeating-linear-gradient(90deg, #ee0 0 4px, #000 4px 8px) top / 100% 1px no-repeat,
        repeating-linear-gradient(90deg, #ee0 0 4px, #000 4px 8px) bottom / 100% 1px no-repeat,
        repeating-linear-gradient(#ee0 0 4px, #000 4px 8px) left / 1px 100% no-repeat,
        repeating-linear-gradient(#ee0 0 4px, #000 4px 8px) right / 1px 100% no-repeat,
        #fff;
}
.pointer {
    position: absolute;
    left: calc(50% + 317px);
    top: calc(50% - 52px);
}
.view > .scroll {
    margin: 3px 2px 0 1px;
}
.view > .scroll-h {
    width: auto;
    height: 14px;
    margin: 1px -3px 3px 3px;
}
.nav {
    padding: 0 0 2px 4px;
}
.statusbar {
    height: 32px;
    flex: none;
    display: flex;
    align-items: center;
    padding: 0 0 2px 6px;
    border-bottom: 1px solid #5c5c5c;
    font: 12px/16px Lato, "Open Sans", sans-serif;
}
.coords {
    width: 78px;
    color: #999;
    font: 11px/16px "Open Sans", sans-serif;
    white-space: nowrap;
}
.unit {
    flex: none;
    width: 47px;
    height: 28px;
    gap: 2px;
    padding: 0 4px;
    font-size: 11px;
}
.unit select {
    padding: 0;
}
.zoom {
    display: flex;
    height: 28px;
    margin: 0 3px 0 1px;
    background: #1f1f1f;
    font-size: 10px;
}
.zoom input {
    width: 29px;
    padding-left: 2px;
}
.zoom button {
    width: 18px;
    background: #2c2c2c;
    border: 1px solid #1b1b1b;
    border-radius: 3px;
}
.status-icon {
    margin-right: 3px;
    color: #ccc;
}

/* brushes and layers */
.brushes,
.layers {
    padding: 2px 3px 0 2px;
}
.entry {
    height: 20px;
    display: flex;
    align-items: center;
    padding: 0 5px 0 2px;
    background: #1f1f1f;
}
.entry input {
    flex: 1;
}
.filter {
    font-style: italic;
}
.filter::placeholder {
    color: #777;
}
.brush-title {
    margin: 2px 0;
    font-style: italic;
}
.brush-list {
    display: flex;
    justify-content: space-between;
    height: 181px;
    margin-bottom: 3px;
    background: #484848;
}
.brush-grid {
    display: grid;
    grid-template-columns: repeat(5, 34px);
    grid-auto-rows: 34px;
    overflow: hidden;
    background: #fff;
}
.brush-list .scroll {
    padding-bottom: 101px;
}
.brushes .spin {
    margin-top: 2px;
}
.brushes .dock-buttons {
    height: 25px;
    border: 0;
    padding: 0;
}
.grip {
    height: 7px;
    display: flex;
    justify-content: center;
    align-items: center;
    gap: 3px;
    border-top: 1px solid #4c4c4c;
}
.grip i {
    width: 5px;
    height: 2px;
    background: #aaa;
}
.labelled {
    height: 22px;
}
.layers {
    flex: 1;
    display: flex;
    flex-direction: column;
    gap: 2px;
    padding-top: 3px;
}
.lock {
    display: flex;
    align-items: center;
    gap: 10px;
    height: 24px;
    margin-left: -2px;
}
.lock button {
    color: #bbb;
}
.checker {
    width: 13px;
    height: 13px;
    background: conic-gradient(#ccc 25%, #666 0 50%, #ccc 0 75%, #666 0) 0 0 / 6px 6px;
}
.layer-list {
    flex: 1;
    background: #333;
}
.layer-head {
    display: flex;
    height: 22px;
    background: #454545;
    color: #bbb;
}
.layer-head span {
    width: 28px;
    display: flex;
    align-items: center;
    justify-content: center;
    border-right: 1px solid #363636;
}
.layer {
    display: flex;
    align-items: center;
    height: 40px;
    padding-left: 4px;
    background: #1f1f1f;
}
.layer svg {
    color: #bbb;
}
.layer i {
    width: 27px;
    height: 36px;
    margin: 0 4px 0 51px;
    background: #fff;
}

/* taskbar */
.taskbar {
    height: 40px;
    flex: none;
    display: flex;
    background: #4b3b10;
    color: #fff;
    font: 12px/18px "Open Sans", sans-serif;
}
.start {
    width: 48px;
}
.search {
    width: 288px;
    display: flex;
    align-items: center;
    gap: 11px;
    padding: 0 18px 0 12px;
    background: #6e5a30;
    border: 1px solid #85734d;
}
.search input {
    flex: 1;
    font-size: 14px;
}
.search input::placeholder {
    color: #e4dcc8;
}
.apps {
    display: flex;
}
.apps button {
    position: relative;
    width: 43px;
}
.apps button:first-child {
    width: 48px;
}
.apps svg[viewBox] {
    width: 25px;
    height: 25px;
}
.divider {
    width: 4px;
    margin: 12px 12px 12px 6px;
    border: 1px solid #66552c;
    border-width: 0 1px;
}
.open::after {
    content: "";
    position: absolute;
    left: 5px;
    right: 4px;
    bottom: 0;
    height: 2px;
    background: #ffe4a0;
}
.apps .current {
    background: #8b6d25;
}
.current::after {
    left: 0;
    right: 0;
}
.count {
    position: absolute;
    right: 0;
    bottom: 4px;
    width: 18px;
    height: 18px;
    border: 1px solid #bdb083;
    border-radius: 9px;
    background: #6b5b2a;
    font: 11px/16px "Open Sans", sans-serif;
}
.tray {
    flex: 1;
    display: flex;
    align-items: center;
    justify-content: flex-end;
    gap: 9px;
    margin-right: 4px;
    padding-right: 19px;
    border-right: 1px solid #8a7c58;
    font: 12px/18px Lato, "Open Sans", sans-serif;
}
.help {
    width: 24px;
    height: 24px;
}
.tray time {
    text-align: center;
    margin: 0 5px 0 2px;
}
```
FILE: script.js
```javascript
const SVG = 'http://www.w3.org/2000/svg';
const MM = 1.475; // pixels per millimetre at 12.5 %

function add(parent, name, attrs, text) {
    const el = document.createElementNS(SVG, name);
    for (const key in attrs) el.setAttribute(key, attrs[key]);
    if (text) el.textContent = text;
    parent.appendChild(el);
}

function drawRulers() {
    const canvas = document.getElementById('canvas');
    const h = document.getElementById('rulerH');
    const v = document.getElementById('rulerV');
    const w = canvas.clientWidth;
    const t = canvas.clientHeight;
    const x0 = w / 2 - 155;
    const y0 = t / 2 - 219;
    h.innerHTML = '';
    v.innerHTML = '';
    add(h, 'path', {d: `M0 16.5H${w}`});
    add(v, 'path', {d: `M15.5 0V${t}`});
    for (let mm = -300; mm <= 600; mm += 5) {
        const x = Math.round(x0 + mm * MM) + 0.5;
        const y = Math.round(y0 + mm * MM) + 0.5;
        const len = mm % 50 === 0 ? 13 : mm % 10 === 0 ? 6 : 3;
        if (x > 0 && x < w) add(h, 'path', {d: `M${x} 17v${-len}`});
        if (y > 0 && y < t - 2) add(v, 'path', {d: `M16 ${y}h${-len}`});
        if (mm % 50 === 0) {
            if (x > 0 && x < w - 20) add(h, 'text', {x: x + 2, y: 13}, String(mm));
            String(mm).split('').forEach((ch, i) => {
                const ty = y + 9 + i * 9;
                if (ty > 8 && ty < t) add(v, 'text', {x: 2, y: ty}, ch);
            });
        }
    }
    // pointer markers
    add(h, 'path', {d: `M${w / 2 + 316} 12h8l-4 4z`, fill: '#ddd'});
    add(v, 'path', {d: `M11 ${t / 2 - 53}v8l4-4z`, fill: '#ddd'});
}

let seed = 7;
function rnd() {
    seed = (seed * 16807) % 2147483647;
    return seed / 2147483647;
}

function splat(svg, n, spread, size, opts) {
    for (let i = 0; i < n; i++) {
        const a = rnd() * Math.PI * 2;
        const r = (opts && opts.even ? Math.sqrt(rnd()) : rnd()) * spread;
        add(svg, 'circle', {
            cx: (17 + Math.cos(a) * r).toFixed(1),
            cy: (17 + Math.sin(a) * r).toFixed(1),
            r: (size * (0.4 + rnd() * 0.8)).toFixed(1),
            fill: opts && opts.ring ? '#fff' : '#111',
            stroke: opts && opts.ring ? '#222' : 'none',
            'stroke-width': 0.8,
            'fill-opacity': opts && opts.soft ? 0.5 : 0.9
        });
    }
}

function soft(svg, rx, ry, core) {
    const id = 'soft' + rx + ry;
    svg.innerHTML = `<radialGradient id="${id}"><stop offset="${core}" stop-color="#000"/><stop offset="1" stop-color="#000" stop-opacity="0"/></radialGradient>
        <ellipse cx="17" cy="17" rx="${rx}" ry="${ry}" fill="url(#${id})"/>`;
}

const brushes = [
    null,
    null,
    s => add(s, 'circle', {cx: 17, cy: 17, r: 1.5}),
    s => { add(s, 'path', {d: 'M.5.5h33v33H.5z', fill: 'none', stroke: '#000'}); add(s, 'path', {d: 'M3 13h28v7H3z'}); },
    s => soft(s, 14, 6, 0.3),
    s => add(s, 'path', {d: 'M3 16.500h29', stroke: '#000'}),
    s => soft(s, 11, 11, 0),
    s => soft(s, 12, 12, 0.1),
    s => soft(s, 14, 14, 0.5),
    s => add(s, 'circle', {cx: 17, cy: 17, r: 15.5}),
    s => add(s, 'path', {d: 'M9 5l8 6 10-5-3 9 7 4h-9l-4 11-4-10-10-1 7-6z'}),
    s => { soft(s, 11, 10, 0.3); splat(s, 150, 12, 0.9); },
    s => splat(s, 150, 12, 0.9, {soft: 1}),
    s => splat(s, 150, 11, 1, {soft: 1}),
    s => splat(s, 110, 10, 1.5, {soft: 1}),
    s => { soft(s, 12, 13, 0.4); splat(s, 160, 14, 0.9); },
    s => add(s, 'path', {d: 'M9 5l4 7', stroke: '#aaa', 'stroke-width': 2}),
    s => splat(s, 9, 15, 1.1, {even: 1}),
    s => splat(s, 26, 15, 1.5, {even: 1}),
    s => splat(s, 32, 17, 0.6, {even: 1}),
    s => { splat(s, 80, 13, 0.9, {soft: 1}); splat(s, 45, 11, 1.8, {ring: 1}); },
    s => { add(s, 'circle', {cx: 17, cy: 17, r: 14, fill: '#222'}); splat(s, 110, 14, 2.2, {ring: 1, even: 1}); },
    s => splat(s, 300, 15, 1, {even: 1, soft: 1}),
    s => { add(s, 'circle', {cx: 17, cy: 17, r: 14, fill: '#ddd'}); splat(s, 220, 14, 0.8, {even: 1}); },
    s => { add(s, 'circle', {cx: 17, cy: 17, r: 14, fill: '#888'}); splat(s, 60, 12, 1.8, {even: 1, soft: 1}); add(s, 'path', {d: 'M3 17a14 14 0 0 1 28 0q-9-5-15 0T3 17z', 'fill-opacity': 0.6}); },
    s => add(s, 'ellipse', {cx: 18, cy: 11, rx: 11, ry: 3, fill: '#333'}),
    s => add(s, 'path', {d: 'M7 8h20v3H7z', fill: '#aaa', stroke: '#777'}),
    s => splat(s, 30, 12, 0.6),
    s => add(s, 'path', {d: 'M8 5l6 8 4-3', fill: 'none', stroke: '#888', 'stroke-width': 2}),
    s => add(s, 'path', {d: 'M4 7l7 7M10 8l-5 6M15 8l4 5', stroke: '#888', 'stroke-width': 2})
];

function drawBrushes() {
    const grid = document.getElementById('brushGrid');
    brushes.forEach((draw, i) => {
        const svg = document.createElementNS(SVG, 'svg');
        svg.setAttribute('width', 34);
        svg.setAttribute('height', 34);
        if (draw) draw(svg);
        if (i > 2 && i !== 16) add(svg, 'path', {d: 'M28 30.500h5M30.500 28v5', stroke: i > 10 ? '#402' : '#004'});
        if (i === 2 || i === 16) add(svg, 'path', {d: 'M33 29v4h-4z', fill: i === 2 ? '#88a0e0' : '#e090a0'});
        grid.appendChild(svg);
    });
}

drawRulers();
drawBrushes();
window.addEventListener('resize', drawRulers);
```
